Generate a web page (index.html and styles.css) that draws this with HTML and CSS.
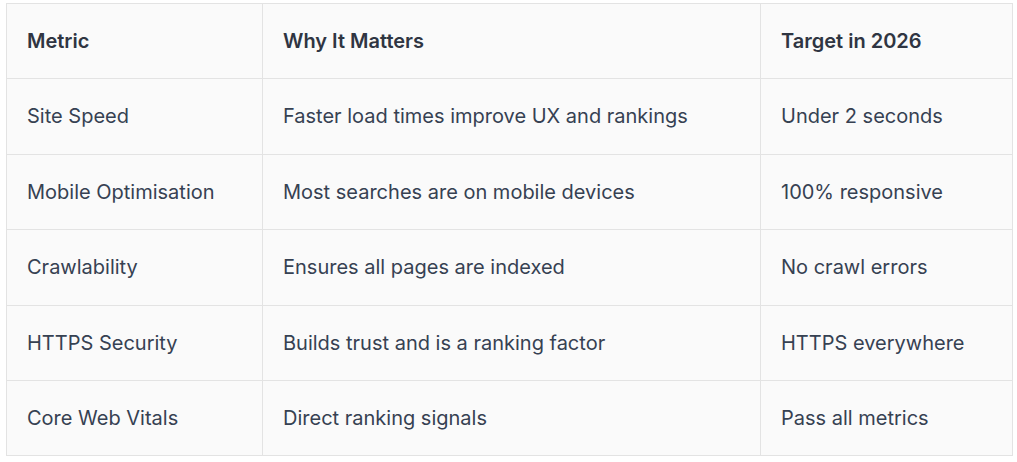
FILE: index.html
```html
<!DOCTYPE html>
<html lang="en">
<head>
<meta charset="utf-8">
<link rel="stylesheet" href="styles.css">
</head>
<body>
<div class="wrap">
<table class="metrics">
  <colgroup>
    <col class="c1"><col class="c2"><col class="c3">
  </colgroup>
  <thead>
    <tr><th>Metric</th><th>Why It Matters</th><th>Target in 2026</th></tr>
  </thead>
  <tbody>
    <tr><td>Site Speed</td><td>Faster load times improve UX and rankings</td><td>Under 2 seconds</td></tr>
    <tr><td>Mobile Optimisation</td><td>Most searches are on mobile devices</td><td>100% responsive</td></tr>
    <tr><td>Crawlability</td><td>Ensures all pages are indexed</td><td>No crawl errors</td></tr>
    <tr><td>HTTPS Security</td><td>Builds trust and is a ranking factor</td><td>HTTPS everywhere</td></tr>
    <tr><td>Core Web Vitals</td><td>Direct ranking signals</td><td>Pass all metrics</td></tr>
  </tbody>
</table>
</div>
</body>
</html>
```
FILE: styles.css
```css
html, body {
  margin: 0;
  background: #ffffff;
}
.wrap {
  padding: 3px 5px 0 6px;
}
.metrics {
  width: 1006px;
  border-collapse: collapse;
  table-layout: fixed;
  background: #fafafa;
  font-family: Inter, "Noto Sans", sans-serif;
  font-size: 20px;
  line-height: 26.4px;
  color: #364152;
}
.c1 { width: 256px; }
.c2 { width: 498px; }
.c3 { width: 252px; }
.metrics th,
.metrics td {
  border: 1px solid #e3e3e3;
  padding: 24px 20px;
  text-align: left;
  vertical-align: middle;
}
.metrics th {
  font-weight: 600;
  color: #2f3542;
}
```
